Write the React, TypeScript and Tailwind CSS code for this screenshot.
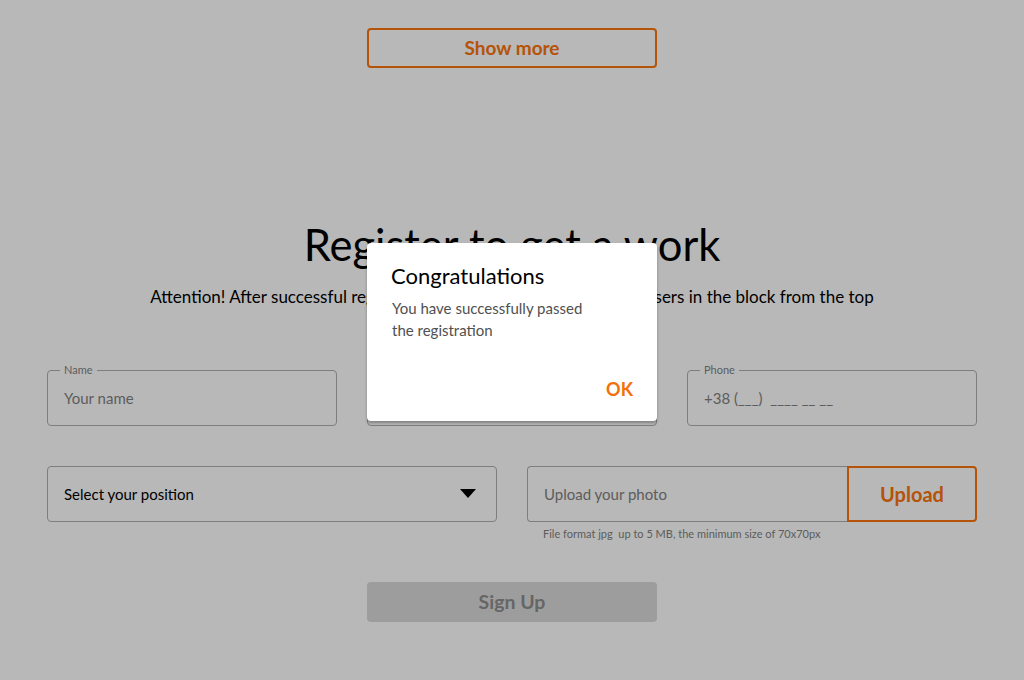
import React from "react";

const font = { fontFamily: "Lato, 'Noto Sans', sans-serif" };

function Field({ label, placeholder }: { label: string; placeholder: string }) {
  return (
    <div className="relative h-[56px] w-[290px] rounded-[4px] border border-[#aaaaaa] px-4 flex items-center">
      <span className="absolute left-[12px] top-[-8px] bg-[#f8f8f8] px-[4px] text-[11px] leading-[14px] text-[#7e7e7e]">
        {label}
      </span>
      <span className="whitespace-pre text-[15px] text-[#7e7e7e]">{placeholder}</span>
    </div>
  );
}

export default function App() {
  return (
    <div className="relative h-[680px] w-[1024px] overflow-hidden bg-[#f8f8f8]" style={font}>
      <div className="flex flex-col items-center pt-[28px]">
        <button className="h-[40px] w-[290px] rounded-[4px] border-2 border-[#f4700b] text-[19px] font-bold text-[#f4700b]">
          Show more
        </button>
        <h1 className="mt-[150px] text-[43.5px] leading-[52px] text-black">Register to get a work</h1>
        <p className="mt-[16px] text-[17px] leading-[22px] text-black">
          Attention! After successful registration and alert, update the list of users in the block from the top
        </p>
        <div className="mt-[62px] flex gap-[30px]">
          <Field label="Name" placeholder="Your name" />
          <Field label="Email" placeholder="Your email" />
          <Field label="Phone" placeholder="+38 (___)  ____ __ __" />
        </div>
        <div className="mt-[40px] flex gap-[30px]">
          <div className="flex h-[56px] w-[450px] items-center justify-between rounded-[4px] border border-[#aaaaaa] pl-4 pr-[20px]">
            <span className="text-[15px] text-black">Select your position</span>
            <svg width="16" height="10" viewBox="0 0 16 10">
              <path d="M0 0 H16 L8 9 Z" fill="#000" />
            </svg>
          </div>
          <div className="flex w-[450px] flex-col">
            <div className="flex h-[56px]">
              <div className="flex flex-1 items-center rounded-l-[4px] border border-r-0 border-[#aaaaaa] px-4">
                <span className="text-[15px] text-[#7e7e7e]">Upload your photo</span>
              </div>
              <button className="w-[130px] rounded-r-[4px] border-2 border-[#f4700b] text-[20px] font-bold text-[#f4700b]">
                Upload
              </button>
            </div>
            <span className="mt-[4px] pl-4 text-[11px] leading-[16px] text-[#7e7e7e]">
              File format jpg&nbsp; up to 5 MB, the minimum size of 70x70px
            </span>
          </div>
        </div>
        <button className="mt-[40px] h-[40px] w-[290px] rounded-[4px] bg-[#d4d4d4] text-[19.5px] font-bold text-[#8a8a8a]">
          Sign Up
        </button>
      </div>

      <div className="absolute inset-0 bg-black/[0.26]" />

      <div className="absolute left-[367px] top-[243px] flex h-[178px] w-[290px] flex-col rounded-[4px] bg-white pl-[24px] pr-[24px] pt-[19px] shadow-[0_2px_3px_rgba(0,0,0,0.3)]">
        <h2 className="text-[22px] leading-[28px] text-black">Congratulations</h2>
        <p className="mt-[7px] w-[210px] pl-[1px] text-[15px] leading-[22px] text-[#505050]">
          You have successfully passed the registration
        </p>
        <div className="mt-auto mb-[18px] flex justify-end">
          <span className="text-[18px] font-bold text-[#f4700b]">OK</span>
        </div>
      </div>
    </div>
  );
}
